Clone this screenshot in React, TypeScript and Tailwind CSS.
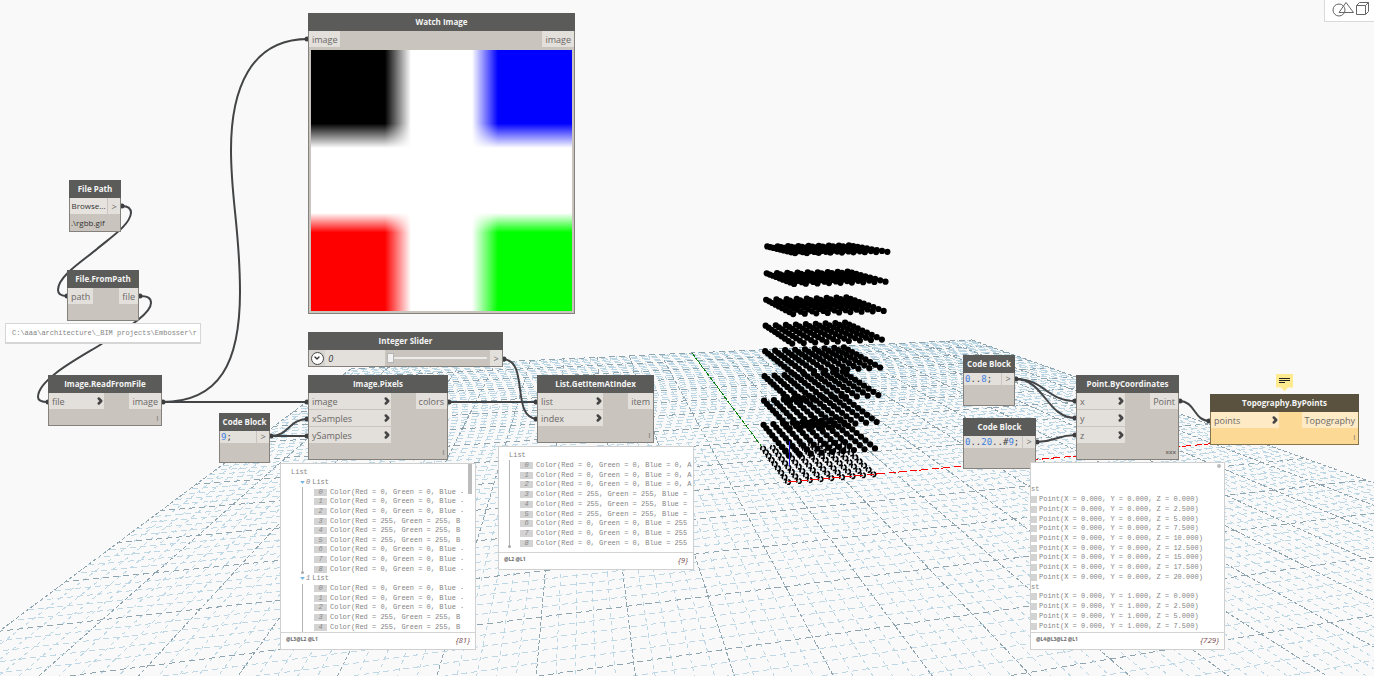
import type { ReactNode } from "react";
import { ChevronDown, ChevronRight } from "lucide-react";

type Pt = [number, number];

const UNITS = 50;

/** Perspective projection of a model point (units) to canvas pixels. */
function project(x: number, y: number, z = 0): Pt {
  const u = x / UNITS;
  const v = y / UNITS;
  const w = z / 20;
  const d = 1 + 0.1805 * u + 0.842 * v - 0.08 * w;
  return [
    (788 + 691.2 * u + 486.7 * v - 56.6 * w) / d,
    (482 + 37.4 * u + 168.2 * v - 249 * w) / d,
  ];
}

interface GridLine {
  a: Pt;
  b: Pt;
  major: boolean;
  across: boolean;
}

const gridLines: GridLine[] = [];
for (let i = -UNITS; i <= UNITS; i++) {
  const u = i / UNITS;
  const major = i % 5 === 0;
  if (i !== 0) {
    const near = Math.max(-1, (-218 - 88.6 * u) / 421);
    gridLines.push({ a: project(i, UNITS), b: project(i, near * UNITS), major, across: false });
  } else {
    gridLines.push({ a: project(0, 0), b: project(0, -27), major, across: false });
  }
  if (i > -46) {
    const start = i === 0 ? -1 : Math.max(-1, (0.15 - 1 - 0.842 * u) / 0.1805);
    gridLines.push({
      a: project(start * UNITS, i),
      b: project(i === 0 ? 0 : UNITS, i),
      major,
      across: true,
    });
  }
}

const range = (n: number) => Array.from({ length: n }, (_, i) => i);

const cloud: { p: Pt; floor: boolean }[] = [];
for (const k of range(9))
  for (const j of range(9))
    for (const i of range(9))
      cloud.push({ p: project(i, j, k * 2.5), floor: k === 0 });

function Scene() {
  const origin = project(0, 0);
  const xEnd = project(UNITS, 0);
  const yEnd = project(0, UNITS);
  return (
    <svg className="absolute inset-0 size-full" aria-hidden="true">
      <g shapeRendering="crispEdges" strokeWidth="1">
        {gridLines.map((l, n) => (
          <line
            key={n}
            x1={l.a[0]}
            y1={l.a[1]}
            x2={l.b[0]}
            y2={l.b[1]}
            stroke={l.major ? "#8ea4ae" : "#bdd8e4"}
            strokeDasharray={l.across ? "6 4" : l.major ? "4 2" : "4 4"}
            strokeDashoffset={l.across ? (n * 7) % 10 : 0}
          />
        ))}
        <line x1={origin[0]} y1={origin[1]} x2={yEnd[0]} y2={yEnd[1]} stroke="#108010" strokeDasharray="5 1" />
      </g>
      {cloud.map(({ p, floor }, n) =>
        floor ? (
          <circle key={n} cx={p[0]} cy={p[1]} r="2.3" fill="#dfe6ea" stroke="#000" strokeWidth="1.6" strokeDasharray="4 1" />
        ) : (
          <circle key={n} cx={p[0]} cy={p[1]} r="3.1" fill="#000" />
        ),
      )}
      <line x1={origin[0]} y1={origin[1]} x2={xEnd[0]} y2={xEnd[1]} stroke="#f00" strokeWidth="1" strokeDasharray="9 4 7 2" shapeRendering="crispEdges" />
      <line x1="789" y1="441" x2="789" y2="466" stroke="#1a12d8" shapeRendering="crispEdges" />
    </svg>
  );
}

const wires = [
  "M122 206C128 206 131 208 131 213C130 225 110 238 97 249C84 260 58 276 58 290C58 295 62 296 67 296",
  "M139 296C148 296 151 298 151 303C151 315 120 332 103 343C85 355 38 378 38 397C38 401 42 402 48 402",
  "M162 402C220 402 240 362 240 292C240 230 231 200 231 150C231 90 250 39 308 39",
  "M162 402H308",
  "M270 436C290 436 288 419 308 419",
  "M270 436H308",
  "M448 402H537",
  "M503 359C530 361 510 417 537 419",
  "M1015 379C1045 379 1046 401 1076 401",
  "M1015 379C1045 379 1046 418 1076 418",
  "M1036 442C1056 442 1056 435 1076 435",
  "M1179 401C1196 401 1193 421 1210 421",
];

const wireEnds: Pt[] = [
  [122, 206], [67, 296], [140, 296], [48, 402], [163, 402], [307, 39], [307, 402], [271, 436],
  [307, 419], [307, 436], [449, 402], [536, 402], [504, 359], [536, 419], [1016, 379], [1075, 401],
  [1075, 418], [1037, 442], [1075, 435], [1180, 401], [1209, 421],
];

function Wires() {
  return (
    <svg className="absolute inset-0 size-full" aria-hidden="true">
      <g fill="none" stroke="#424446" strokeWidth="2">
        {wires.map((d) => (
          <path key={d} d={d} />
        ))}
      </g>
      {wireEnds.map(([x, y]) => (
        <circle key={`${x}-${y}`} cx={x} cy={y} r="2.5" fill="#3c3e40" />
      ))}
    </svg>
  );
}

function Node({ title, place, warm, children }: { title: string; place: string; warm?: boolean; children: ReactNode }) {
  return (
    <section className={`absolute flex flex-col ${place}`}>
      <h2
        className={`flex h-[18px] shrink-0 items-center justify-center whitespace-nowrap pb-px text-[8px] font-bold text-[#f4f4f4] ${
          warm ? "bg-[#5a523f]" : "bg-[#5b5b59]"
        }`}
      >
        {title}
      </h2>
      <div
        className={`relative flex grow flex-col border-x border-b ${
          warm ? "border-[#85754d] bg-[#fdd996]" : "border-[#85827d] bg-[#c9c5be]"
        }`}
      >
        {children}
      </div>
    </section>
  );
}

function Inputs({ names, width, warm, chevron = true }: { names: string[]; width: string; warm?: boolean; chevron?: boolean }) {
  return (
    <ul className={`flex flex-col gap-px ${width}`}>
      {names.map((n) => (
        <li key={n} className={`flex h-4 items-center justify-between pl-[3px] ${warm ? "bg-[#feebc6]" : "bg-[#e3dfdb]"}`}>
          {n}
          {chevron && <ChevronRight className="-mr-px size-[10px] text-[#444]" strokeWidth={6} />}
        </li>
      ))}
    </ul>
  );
}

function Output({ name, warm }: { name: string; warm?: boolean }) {
  return <div className={`flex h-4 items-center px-[3px] ${warm ? "bg-[#feebc6]" : "bg-[#e3dfdb]"}`}>{name}</div>;
}

function Ports({ children }: { children: ReactNode }) {
  return <div className="flex items-start justify-between text-[9px] text-[#6a6866]">{children}</div>;
}

function Lacing({ children = "|" }: { children?: ReactNode }) {
  return <span className="absolute right-[2px] bottom-[2px] text-[6px] leading-[10px] font-bold text-[#77736e]">{children}</span>;
}

function CodeBlock({ place, code }: { place: string; code: string }) {
  return (
    <Node title="Code Block" place={place}>
      <div className="flex h-3 gap-px">
        <code className="grow bg-[#e3dfdb] pl-px font-['DejaVu_Sans_Mono',monospace] text-[9px] leading-3 text-[#444]">
          {code.split(/(\d+)/).map((part, i) =>
            /\d/.test(part) ? (
              <span key={i} className="text-[#3f7fe0]">
                {part}
              </span>
            ) : (
              part
            ),
          )}
        </code>
        <span className="w-3 bg-[#e3dfdb] text-center text-[9px] leading-3 text-[#6a6866]">&gt;</span>
      </div>
    </Node>
  );
}

function Row({ index, text }: { index: number; text: string }) {
  return (
    <span className="flex items-center gap-[3px] whitespace-pre">
      <span className="h-[7px] w-[13px] shrink-0 bg-[#d3d3d3] text-center leading-[7px] text-[#8a8a8a] italic">{index}</span>
      {text}
    </span>
  );
}

function PreviewFooter({ levels, count }: { levels: string; count: string }) {
  return (
    <footer className="flex h-[17px] shrink-0 items-center justify-between border-t border-[#d4d4d4] px-[5px] pb-[3px] font-['Open_Sans',sans-serif]">
      <span className="text-[5px] font-bold text-[#666]">{levels}</span>
      <span className="text-[8px] text-[#7a4a4e] italic">{count}</span>
    </footer>
  );
}

function Guide({ place }: { place: string }) {
  return (
    <span className={`absolute flex w-[3px] justify-center ${place}`}>
      <span className="w-px bg-[#b4b4b4]" />
    </span>
  );
}

const previewBox =
  "absolute flex flex-col border border-[#d0d0d0] bg-white font-['Liberation_Mono',monospace] text-[7px] leading-[9px] text-[#858585]";

const shortColors = range(9).map((i) =>
  i >= 3 && i <= 5 ? "Color(Red = 255, Green = 255, B" : "Color(Red = 0, Green = 0, Blue -",
);
const itemColors = range(9).map((i) =>
  i < 3
    ? "Color(Red = 0, Green = 0, Blue = 0, A"
    : i < 6
      ? "Color(Red = 255, Green = 255, Blue ="
      : "Color(Red = 0, Green = 0, Blue = 255",
);

function SubList({ name }: { name: string }) {
  return (
    <li className="flex items-center gap-[2px] pl-[19px]">
      <svg viewBox="0 0 6 4" className="-mr-px h-[3px] w-[5px]" aria-hidden="true">
        <path d="M0 0H6L3 4Z" fill="#6db3e6" />
      </svg>
      <i>{name}</i>List
    </li>
  );
}

function ColorRows({ texts, indent }: { texts: string[]; indent: string }) {
  return (
    <>
      {texts.map((t, i) => (
        <li key={i} className={`overflow-hidden ${indent}`}>
          <Row index={i} text={t} />
        </li>
      ))}
    </>
  );
}

function PixelsPreview() {
  return (
    <div className={`${previewBox} top-[463px] left-[280px] w-[196px] pt-1`}>
      <ul className="grid h-[164px] auto-rows-fr items-center pr-3">
        <li className="pl-[10px]">List</li>
        <SubList name="0" />
        <ColorRows texts={shortColors} indent="pl-[33px]" />
        <SubList name="1" />
        <ColorRows texts={shortColors.slice(0, 5)} indent="pl-[33px]" />
      </ul>
      <Guide place="top-[23px] left-[20px] h-[86px]" />
      <span className="absolute top-[107px] left-[20px] size-[3px] rounded-full bg-[#aaa]" />
      <Guide place="top-[120px] left-[20px] h-[48px]" />
      <span className="absolute top-0 right-[3px] h-[30px] w-1 bg-[#bcbcbc]" />
      <PreviewFooter levels="@L3@L2 @L1" count="{81}" />
    </div>
  );
}

function ItemPreview() {
  return (
    <div className={`${previewBox} top-[446px] left-[498px] w-[196px] pt-1`}>
      <ul className="grid h-[97px] auto-rows-fr items-center">
        <li className="pl-[10px]">List</li>
        <ColorRows texts={itemColors} indent="pl-[21px]" />
      </ul>
      <Guide place="top-[13px] left-[9px] h-[86px]" />
      <span className="absolute top-[98px] left-[9px] size-[3px] rounded-full bg-[#aaa]" />
      <div className="h-1" />
      <PreviewFooter levels="@L2 @L1" count="{9}" />
    </div>
  );
}

const heights = ["0.000", "2.500", "5.000", "7.500", "10.000", "12.500", "15.000", "17.500", "20.000"];

function PointRows({ y, count }: { y: string; count: number }) {
  return (
    <>
      {heights.slice(0, count).map((z) => (
        <li key={z} className="flex items-center gap-[2px] whitespace-pre">
          <span className="h-[7px] w-[6px] bg-[#d3d3d3]" />
          {`Point(X = 0.000, Y = ${y}, Z = ${z})`}
        </li>
      ))}
    </>
  );
}

function PointsPreview() {
  return (
    <div className={`${previewBox} top-[462px] left-[1030px] w-[195px] pt-[22px]`}>
      <ul className="grid h-[146px] auto-rows-fr items-center">
        <li>st</li>
        <PointRows y="0.000" count={9} />
        <li>st</li>
        <PointRows y="1.000" count={4} />
      </ul>
      <span className="absolute top-[1px] right-[3px] size-1 rounded-full bg-[#bcbcbc]" />
      <div className="h-px" />
      <PreviewFooter levels="@L4@L3@L2 @L1" count="{729}" />
    </div>
  );
}

function WatchedImage() {
  return (
    <div className="mx-[2px] mt-[3px] mb-[2px] grid h-[261px] grid-cols-[100px_100px] grid-rows-[98px_98px] place-content-between bg-white">
      <div className="bg-black [mask-composite:intersect] [mask-image:linear-gradient(to_right,#000_74%,transparent),linear-gradient(to_bottom,#000_75%,transparent)]" />
      <div className="bg-[#00f] [mask-composite:intersect] [mask-image:linear-gradient(to_left,#000_74%,transparent),linear-gradient(to_bottom,#000_75%,transparent)]" />
      <div className="bg-[#f00] [mask-composite:intersect] [mask-image:linear-gradient(to_right,#000_74%,transparent),linear-gradient(to_top,#000_80%,transparent)]" />
      <div className="bg-[#0f0] [mask-composite:intersect] [mask-image:linear-gradient(to_left,#000_74%,transparent),linear-gradient(to_top,#000_80%,transparent)]" />
    </div>
  );
}

export default function App() {
  return (
    <main className="relative h-screen w-full overflow-hidden bg-[#f9f9f9] font-['Open_Sans',sans-serif] leading-none">
      <Scene />
      <Wires />

      <Node title="File Path" place="left-[69px] top-[180px] w-[52px] h-[52px]">
        <div className="flex h-4 gap-px">
          <button type="button" className="grow bg-[#e6e3df] text-[8px] text-[#333]">
            Browse...
          </button>
          <span className="flex w-3 items-center justify-center bg-[#e3dfdb] text-[9px] text-[#6a6866]">&gt;</span>
        </div>
        <p className="flex grow items-center pl-px text-[8px] text-[#333]">.\rgbb.gif</p>
      </Node>

      <Node title="File.FromPath" place="left-[67px] top-[270px] w-[72px] h-[51px]">
        <Ports>
          <Inputs names={["path"]} width="w-[25px]" chevron={false} />
          <Output name="file" />
        </Ports>
      </Node>

      <Node title="Image.ReadFromFile" place="left-[48px] top-[375px] w-[114px] h-[51px]">
        <Ports>
          <Inputs names={["file"]} width="w-[55px]" />
          <Output name="image" />
        </Ports>
        <Lacing />
      </Node>

      <Node title="Watch Image" place="left-[308px] top-[13px] w-[267px]">
        <Ports>
          <Inputs names={["image"]} width="w-[31px]" chevron={false} />
          <Output name="image" />
        </Ports>
        <WatchedImage />
      </Node>

      <Node title="Integer Slider" place="left-[308px] top-[332px] w-[195px]">
        <div className="flex h-4 items-center">
          <div className="flex h-full w-[21px] items-center justify-center bg-[#d8d4cf]">
            <button
              type="button"
              aria-label="Range settings"
              className="flex size-[13px] items-center justify-center rounded-full border border-[#444] bg-white text-[#333]"
            >
              <ChevronDown className="size-2" strokeWidth={4} />
            </button>
          </div>
          <input
            type="text"
            aria-label="Value"
            defaultValue="0"
            className="h-full w-[60px] bg-[#e3dfdb] px-[3px] text-[9px] text-[#333] italic outline-none"
          />
          <input
            type="range"
            aria-label="Integer Slider"
            min={0}
            max={100}
            defaultValue={0}
            className="mr-[3px] ml-[2px] h-[10px] min-w-0 grow appearance-none bg-transparent [&::-webkit-slider-runnable-track]:h-[10px] [&::-webkit-slider-runnable-track]:bg-[linear-gradient(#eceaea,#eceaea)] [&::-webkit-slider-runnable-track]:bg-[length:100%_2px] [&::-webkit-slider-runnable-track]:bg-center [&::-webkit-slider-runnable-track]:bg-no-repeat [&::-webkit-slider-thumb]:h-[10px] [&::-webkit-slider-thumb]:w-[7px] [&::-webkit-slider-thumb]:appearance-none [&::-webkit-slider-thumb]:border [&::-webkit-slider-thumb]:border-[#b5b5b5] [&::-webkit-slider-thumb]:bg-[#f2f2f2]"
          />
          <span className="flex h-full w-3 shrink-0 items-center justify-center bg-[#e3dfdb] text-[9px] text-[#6a6866]">&gt;</span>
        </div>
      </Node>

      <Node title="Image.Pixels" place="left-[308px] top-[375px] w-[140px] h-[85px]">
        <Ports>
          <Inputs names={["image", "xSamples", "ySamples"]} width="w-[82px]" />
          <Output name="colors" />
        </Ports>
        <Lacing />
      </Node>

      <Node title="List.GetItemAtIndex" place="left-[537px] top-[375px] w-[117px] h-[68px]">
        <Ports>
          <Inputs names={["list", "index"]} width="w-[65px]" />
          <Output name="item" />
        </Ports>
        <Lacing />
      </Node>

      <CodeBlock place="left-[219px] top-[413px] w-[51px] h-[50px]" code="9;" />
      <CodeBlock place="left-[963px] top-[355px] w-[52px] h-[51px]" code="0..8;" />
      <CodeBlock place="left-[963px] top-[418px] w-[73px] h-[51px]" code="0..20..#9;" />

      <Node title="Point.ByCoordinates" place="left-[1076px] top-[375px] w-[103px] h-[85px]">
        <Ports>
          <Inputs names={["x", "y", "z"]} width="w-[48px]" />
          <Output name="Point" />
        </Ports>
        <Lacing>xxx</Lacing>
      </Node>

      <Node title="Topography.ByPoints" place="left-[1210px] top-[394px] w-[149px] h-[51px]" warm>
        <Ports>
          <Inputs names={["points"]} width="w-[68px]" warm />
          <Output name="Topography" warm />
        </Ports>
        <Lacing />
      </Node>

      <svg viewBox="0 0 18 18" className="absolute top-[374px] left-[1276px] size-[18px]" aria-hidden="true">
        <path d="M0 0H17V13.500H12L8.500 17.500L5 13.500H0Z" fill="#ffeb8f" />
        <path d="M3 4.500H14M3 6.500H14M3 8.500H9" stroke="#222" shapeRendering="crispEdges" />
      </svg>

      <div className="absolute top-[323px] left-[5px] w-[196px] overflow-hidden border border-b-2 border-[#d6d6d6] bg-white px-[6px] py-1 font-['Liberation_Mono',monospace] text-[7px] leading-[10px] whitespace-pre text-[#858585]">
        {"C:\\aaa\\architecture\\_BIM projects\\Embosser\\r"}
      </div>
      <PixelsPreview />
      <ItemPreview />
      <PointsPreview />

      <div className="absolute top-0 right-0 flex h-[22px] w-[50px] border-b border-l border-[#d9d9d9] bg-white">
        <button type="button" aria-label="Geometry view" className="size-full">
          <svg viewBox="0 0 49 21" className="size-full" fill="none" stroke="#666" aria-hidden="true">
            <circle cx="14" cy="10" r="6" />
            <path d="M21 2.500L28.500 12.500H14Z" />
            <path d="M31.500 5.500H40.500V14.500H31.500ZM31.500 5.500L34.500 2.500H43.500L40.500 5.500M43.500 2.500V11.500L40.500 14.500" />
          </svg>
        </button>
      </div>
    </main>
  );
}
